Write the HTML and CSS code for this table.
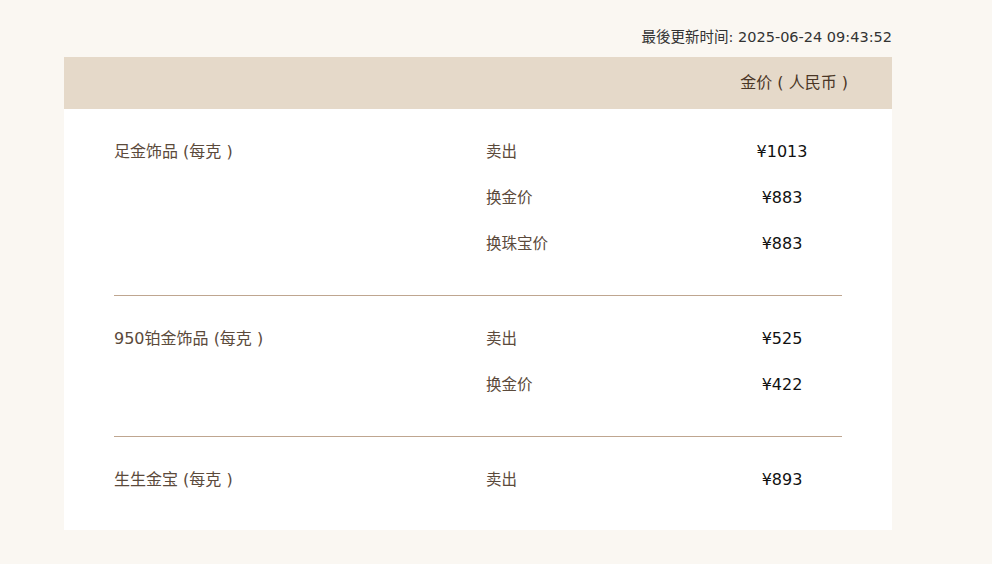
FILE: index.html
```html
<!DOCTYPE html>
<html lang="zh">
<head>
<meta charset="utf-8">
<link rel="stylesheet" href="styles.css">
</head>
<body>
<div class="page">
  <div class="updated">最後更新时间: 2025-06-24 09:43:52</div>
  <div class="card">
    <div class="card-head">金价 ( 人民币 )</div>
    <div class="card-body">
      <div class="group">
        <div class="name">足金饰品 (每克 )</div>
        <div class="rows">
          <div class="row"><span class="kind">卖出</span><span class="price">¥1013</span></div>
          <div class="row"><span class="kind">换金价</span><span class="price">¥883</span></div>
          <div class="row"><span class="kind">换珠宝价</span><span class="price">¥883</span></div>
        </div>
      </div>
      <div class="group">
        <div class="name">950铂金饰品 (每克 )</div>
        <div class="rows">
          <div class="row"><span class="kind">卖出</span><span class="price">¥525</span></div>
          <div class="row"><span class="kind">换金价</span><span class="price">¥422</span></div>
        </div>
      </div>
      <div class="group">
        <div class="name">生生金宝 (每克 )</div>
        <div class="rows">
          <div class="row"><span class="kind">卖出</span><span class="price">¥893</span></div>
        </div>
      </div>
    </div>
  </div>
</div>
</body>
</html>
```

FILE: styles.css
```css
html, body {
  margin: 0;
  padding: 0;
  background: #faf7f2;
  font-family: "DejaVu Sans", "Noto Sans CJK SC", sans-serif;
}
.page {
  width: 828px;
  margin-left: 64px;
  padding-top: 27px;
}
.updated {
  text-align: right;
  font-size: 14.5px;
  color: #333;
  line-height: 20px;
  height: 30px;
}
.card {
  background: #fff;
}
.card-head {
  background: #e5d9c9;
  height: 52px;
  line-height: 52px;
  text-align: right;
  padding-right: 44px;
  font-size: 16px;
  color: #4a3626;
}
.card-body {
  padding: 0 50px 27px;
}
.group {
  display: flex;
  padding: 20px 0 28px;
  border-bottom: 1px solid #bfa690;
}
.group:last-child {
  border-bottom: none;
  padding-bottom: 0;
}
.name {
  width: 372px;
  line-height: 46px;
  font-size: 16px;
  color: #5b4a3b;
}
.rows {
  flex: 1;
}
.row {
  display: flex;
  height: 46px;
  line-height: 46px;
}
.kind {
  flex: 1;
  font-size: 15.5px;
  color: #5b4a3b;
}
.price {
  width: 120px;
  text-align: center;
  font-size: 16px;
  color: #111;
}
```
